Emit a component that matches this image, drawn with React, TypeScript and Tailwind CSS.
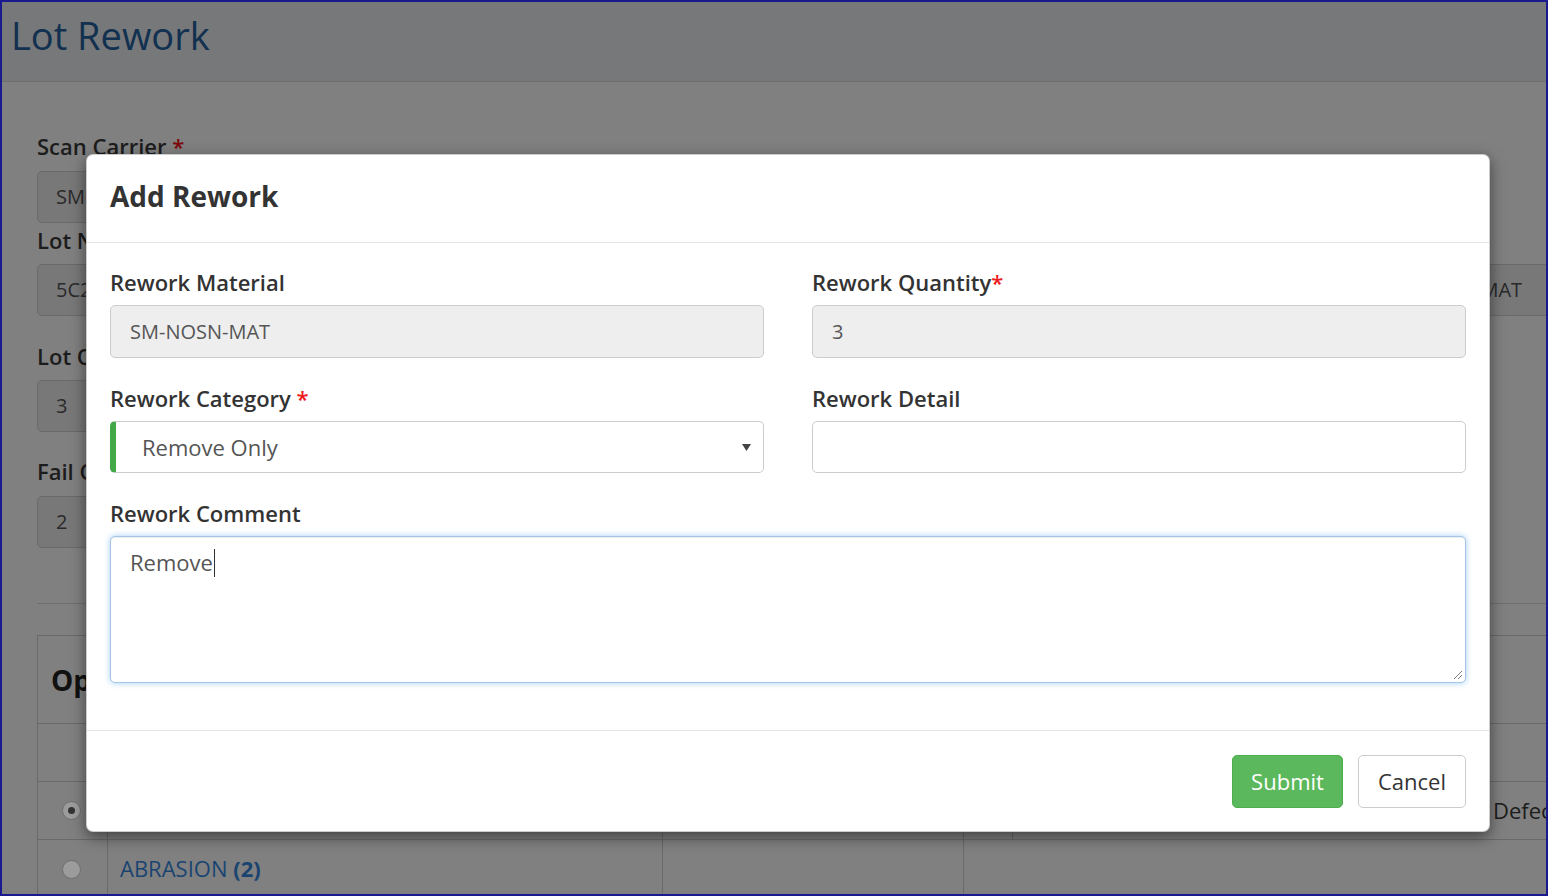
import { ReactNode } from 'react'

function ModalLabel({ children }: { children: ReactNode }) {
  return (
    <div className="mb-[8px] text-[22px] font-semibold leading-[30px] text-[#333]">
      {children}
    </div>
  )
}

function BgLabel({ children, className = '' }: { children: ReactNode; className?: string }) {
  return (
    <div className={`text-[22px] font-semibold leading-[30px] text-[#1c1c1c] ${className}`}>
      {children}
    </div>
  )
}

function BgInput({ value, className = '' }: { value: string; className?: string }) {
  return (
    <div
      className={`flex h-[52px] items-center rounded-[5px] border border-[#6a6a6a] bg-[#787878] pl-[18px] text-[20px] text-[#2a2a2a] ${className}`}
    >
      {value}
    </div>
  )
}

function Radio({ checked }: { checked?: boolean }) {
  return (
    <span className="flex h-[19px] w-[19px] items-center justify-center rounded-full border border-[#6f6f6f] bg-[#9c9c9c]">
      {checked && <span className="h-[7px] w-[7px] rounded-full bg-[#333]" />}
    </span>
  )
}

function BackgroundPage() {
  return (
    <div className="flex flex-col">
      <div className="h-[80px] border-b border-[#6c6d70] bg-[#77787a] pl-[9px] pt-[14px]">
        <h1 className="text-[38px] leading-[38px] text-[#12304f]">Lot Rework</h1>
      </div>

      <div className="pl-[35px] pt-[49px]">
        <BgLabel className="mb-[10px]">
          Scan Carrier <span className="text-[#7d0a0a]">*</span>
        </BgLabel>
        <BgInput value="SM-CARRIER-01" className="w-[720px]" />

        <div className="mt-[2px] flex">
          <div>
            <BgLabel className="mb-[9px]">Lot Number</BgLabel>
            <BgInput value="5C2107A01" className="w-[720px]" />
          </div>
          <div className="ml-auto">
            <BgLabel className="mb-[9px]">Material</BgLabel>
            <BgInput value="SM-NOSN-MAT" className="w-[183px] rounded-r-none border-r-0" />
          </div>
        </div>

        <BgLabel className="mb-[9px] mt-[25px]">Lot Quantity</BgLabel>
        <BgInput value="3" className="w-[720px]" />

        <BgLabel className="mb-[10px] mt-[24px]">Fail Quantity</BgLabel>
        <BgInput value="2" className="w-[720px]" />

        <div className="mt-[55px] border-t border-[#6f6f6f]" />

        <div className="mt-[31px] w-[1530px] border border-[#6a6a6a]">
          <div className="flex h-[88px] items-center border-b border-[#6a6a6a] pl-[13px] text-[28px] font-bold text-[#111]">
            Operations
          </div>
          <div className="h-[58px] border-b border-[#6a6a6a]" />
          <div className="flex h-[58px] border-b border-[#6a6a6a]">
            <div className="flex w-[70px] items-center justify-center border-r border-[#6a6a6a] pr-[3px]">
              <Radio checked />
            </div>
            <div className="w-[555px] border-r border-[#6a6a6a]" />
            <div className="w-[301px] border-r border-[#6a6a6a]" />
            <div className="w-[49px] border-r border-[#6a6a6a]" />
            <div className="w-[468px]" />
            <div className="flex flex-1 items-center whitespace-nowrap pl-[12px] text-[22px] text-[#1c1c1c]">
              Defect
            </div>
          </div>
          <div className="flex h-[58px]">
            <div className="flex w-[70px] items-center justify-center border-r border-[#6a6a6a] pr-[3px]">
              <Radio />
            </div>
            <div className="flex w-[555px] items-center border-r border-[#6a6a6a] pb-[2px] pl-[12px] text-[22px] text-[#1a4470]">
              ABRASION&nbsp;<span className="font-bold">(2)</span>
            </div>
            <div className="w-[301px] border-r border-[#6a6a6a]" />
            <div className="flex-1" />
          </div>
        </div>
      </div>
    </div>
  )
}

function ReworkModal() {
  return (
    <div className="absolute left-[84px] top-[152px] w-[1404px] rounded-[7px] border border-black/20 bg-white shadow-[0_5px_15px_rgba(0,0,0,0.5)]">
      <div className="flex h-[88px] items-center border-b border-[#e5e5e5] pb-[5px] pl-[23px]">
        <h2 className="text-[28px] font-bold text-[#333]">Add Rework</h2>
      </div>

      <div className="grid grid-cols-2 gap-x-[48px] gap-y-[25px] px-[23px] pb-[47px] pt-[24px]">
        <div>
          <ModalLabel>Rework Material</ModalLabel>
          <div className="flex h-[53px] items-center rounded-[5px] border border-[#ccc] bg-[#eee] pl-[19px] text-[20px] text-[#555]">
            SM-NOSN-MAT
          </div>
        </div>
        <div>
          <ModalLabel>
            Rework Quantity<span className="text-[#ee1c1c]">*</span>
          </ModalLabel>
          <div className="flex h-[53px] items-center rounded-[5px] border border-[#ccc] bg-[#eee] pl-[19px] text-[20px] text-[#555]">
            3
          </div>
        </div>

        <div>
          <ModalLabel>
            Rework Category <span className="text-[#ee1c1c]">*</span>
          </ModalLabel>
          <div className="flex h-[52px] items-center justify-between rounded-[5px] border border-l-[6px] border-[#ccc] border-l-[#43a948] bg-white pl-[26px] pr-[12px] text-[22px] text-[#555]">
            <span>Remove Only</span>
            <svg width="9" height="7" viewBox="0 0 9 7">
              <path d="M0 0 H9 L4.5 7 Z" fill="#444" />
            </svg>
          </div>
        </div>
        <div>
          <ModalLabel>Rework Detail</ModalLabel>
          <div className="h-[52px] rounded-[5px] border border-[#ccc] bg-white" />
        </div>

        <div className="col-span-2">
          <ModalLabel>Rework Comment</ModalLabel>
          <div className="relative h-[147px] rounded-[5px] border border-[#a3c5e8] bg-white pl-[19px] pt-[10px] text-[22px] leading-[30px] text-[#555] shadow-[inset_0_1px_1px_rgba(0,0,0,0.075),0_0_6px_rgba(102,175,233,0.6)]">
            Remove
            <span className="ml-px inline-block h-[28px] w-px bg-[#333] align-[-6px]" />
            <svg className="absolute bottom-[3px] right-[3px]" width="9" height="9" viewBox="0 0 9 9">
              <path d="M9 1 L1 9 M9 5 L5 9" stroke="#7a7a7a" strokeWidth="1" />
            </svg>
          </div>
        </div>
      </div>

      <div className="flex justify-end gap-[15px] border-t border-[#e5e5e5] px-[23px] pb-[23px] pt-[24px]">
        <button className="h-[53px] w-[111px] rounded-[5px] border border-[#4cae4c] bg-[#5cb85c] text-[22px] text-white">
          Submit
        </button>
        <button className="h-[53px] w-[108px] rounded-[5px] border border-[#ccc] bg-white text-[22px] text-[#333]">
          Cancel
        </button>
      </div>
    </div>
  )
}

export default function App() {
  return (
    <div className="h-[896px] w-[1548px] overflow-hidden border-2 border-[#1a1a8e] bg-[#808080] font-['Open_Sans',sans-serif]">
      <div className="relative h-full w-full overflow-hidden">
        <BackgroundPage />
        <ReworkModal />
      </div>
    </div>
  )
}
